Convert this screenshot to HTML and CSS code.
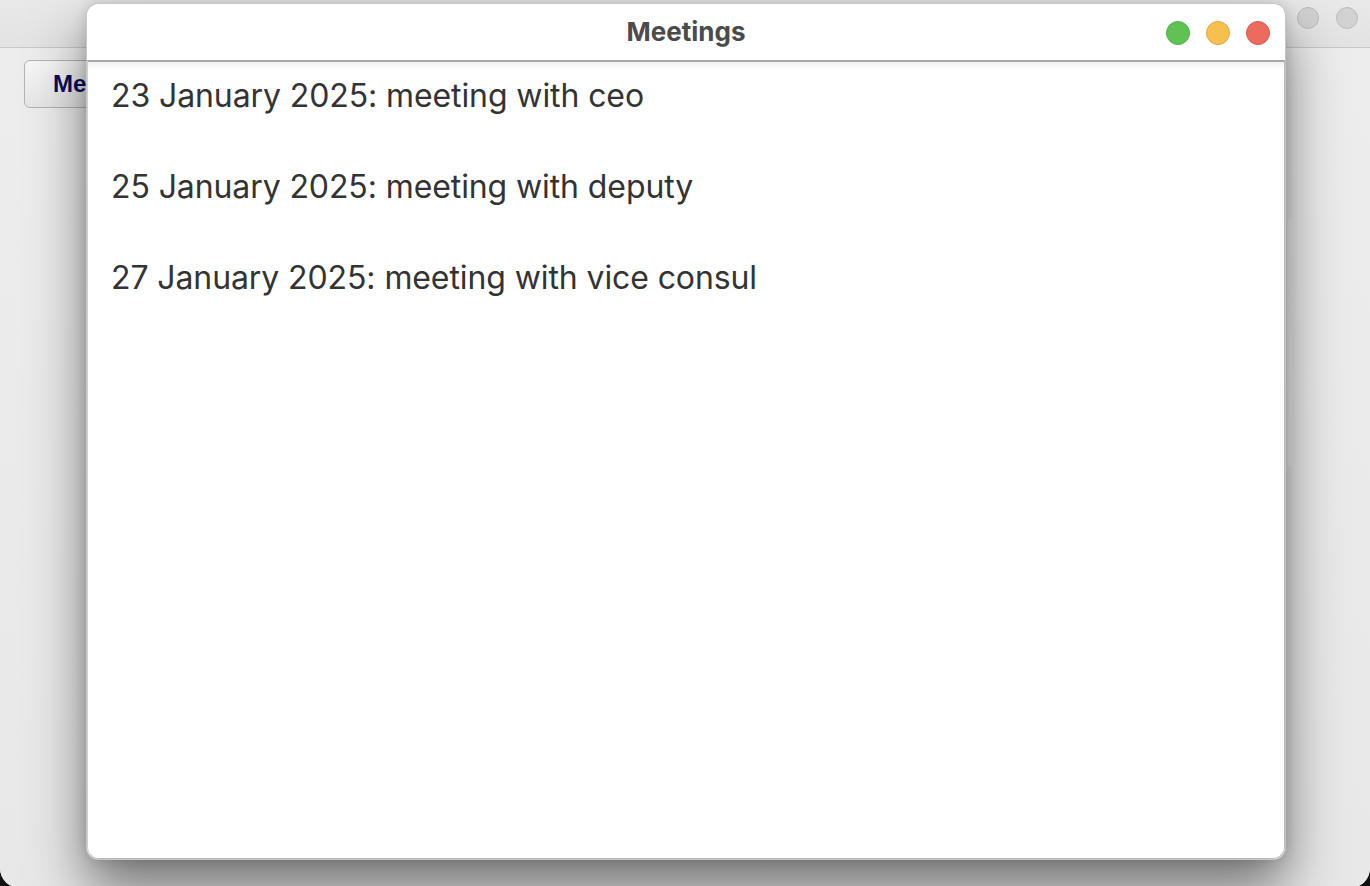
FILE: index.html
```html
<!DOCTYPE html>
<html lang="en">
<head>
<meta charset="utf-8">
<title>Meetings</title>
<link rel="stylesheet" href="styles.css">
</head>
<body>
<div class="desktop">
  <div class="bg-window">
    <div class="bg-titlebar">
      <span class="bg-dot"></span>
      <span class="bg-dot"></span>
    </div>
    <div class="bg-content">
      <button class="bg-button">Meetings</button>
      <div class="bg-scroll"></div>
    </div>
  </div>

  <div class="window">
    <div class="titlebar">
      <div class="title">Meetings</div>
      <div class="lights">
        <span class="light green"></span>
        <span class="light yellow"></span>
        <span class="light red"></span>
      </div>
    </div>
    <div class="content">
      <ul class="meetings">
        <li>23 January 2025: meeting with ceo</li>
        <li>25 January 2025: meeting with deputy</li>
        <li>27 January 2025: meeting with vice consul</li>
      </ul>
    </div>
  </div>
</div>
</body>
</html>
```
FILE: styles.css
```css
html, body {
  margin: 0;
  padding: 0;
  overflow: hidden;
}
body {
  background: #111;
  width: 1370px;
  height: 886px;
}
.desktop {
  position: relative;
  width: 1370px;
  height: 886px;
  overflow: hidden;
  background: #111;
}
.bg-window {
  width: 1370px;
  height: 888px;
  background: #ececec;
  border-radius: 0 0 20px 20px;
  overflow: hidden;
  display: flex;
  flex-direction: column;
}
.bg-titlebar {
  height: 48px;
  flex: none;
  background: linear-gradient(to bottom, #e9e9e9, #e3e3e3);
  border-bottom: 1px solid #c9c9c9;
  display: flex;
  justify-content: flex-end;
  align-items: flex-start;
  gap: 17px;
  padding: 7px 12px 0 0;
  box-sizing: border-box;
}
.bg-dot {
  width: 22px;
  height: 22px;
  border-radius: 50%;
  background: #d2d2d2;
  border: 1px solid #bcbcbc;
  box-sizing: border-box;
}
.bg-content {
  flex: 1;
  position: relative;
  padding: 12px 0 0 24px;
  background: linear-gradient(to bottom, #ededed, #e8e8e8);
}
.bg-button {
  display: block;
  width: 160px;
  height: 48px;
  padding: 0 0 0 28px;
  text-align: left;
  border: 1px solid #b3b3b3;
  border-radius: 6px;
  background: linear-gradient(to bottom, #f7f7f7, #e6e6e6);
  font-family: "Liberation Sans", Arial, sans-serif;
  font-weight: bold;
  font-size: 24px;
  color: #0b0b5c;
}
.bg-scroll {
  position: absolute;
  left: 1287px;
  top: 170px;
  width: 5px;
  height: 248px;
  border-radius: 3px;
  background: rgba(255,255,255,0.35);
}

.window {
  position: absolute;
  left: 86px;
  top: 3px;
  width: 1200px;
  height: 857px;
  box-sizing: border-box;
  background: #ffffff;
  border: 1px solid rgba(0,0,0,0.22);
  border-radius: 13px;
  box-shadow: 0 30px 55px rgba(0,0,0,0.5), 0 0 14px rgba(0,0,0,0.14);
  display: flex;
  flex-direction: column;
  overflow: hidden;
}
.titlebar {
  height: 56px;
  flex: none;
  position: relative;
  display: flex;
  align-items: center;
  justify-content: center;
  background: #ffffff;
}
.title {
  font-family: Inter, "Liberation Sans", sans-serif;
  font-weight: 700;
  font-size: 26px;
  color: #4b4b4b;
  margin-top: -1px;
}
.lights {
  position: absolute;
  right: 15px;
  top: 17px;
  display: flex;
  gap: 16px;
}
.light {
  width: 24px;
  height: 24px;
  border-radius: 50%;
  box-sizing: border-box;
}
.green { background: #5fc354; border: 1px solid #52ad48; }
.yellow { background: #f6c04f; border: 1px solid #dea843; }
.red { background: #ed6a5e; border: 1px solid #d55b50; }

.content {
  flex: 1;
  border-top: 2px solid #a9a9a9;
  border-left: 1px solid #cfcfcf;
  border-right: 1px solid #b8b8b8;
  border-bottom: 1px solid #b8b8b8;
  border-radius: 0 0 12px 12px;
  background: linear-gradient(to bottom, #f1f1f1 0, #ffffff 8px);
  padding: 14px 0 0 23px;
}
.meetings {
  list-style: none;
  margin: 0;
  padding: 0;
  display: flex;
  flex-direction: column;
  gap: 51px;
}
.meetings li {
  font-family: Inter, "Noto Sans", sans-serif;
  font-size: 32px;
  line-height: 40px;
  color: #333333;
  letter-spacing: -0.1px;
}
```
